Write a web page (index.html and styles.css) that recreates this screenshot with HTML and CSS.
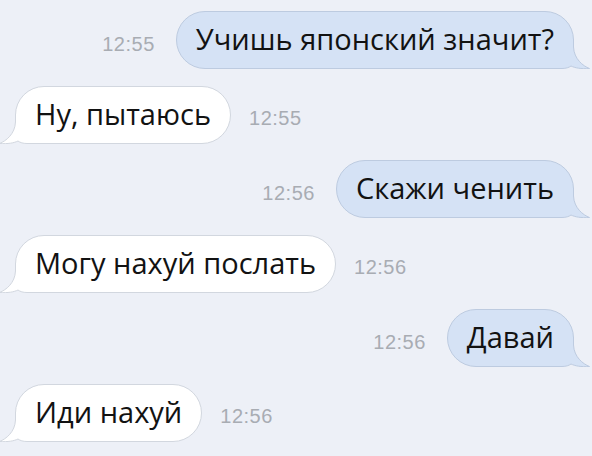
FILE: index.html
```html
<!DOCTYPE html>
<html lang="ru">
<head>
  <meta charset="UTF-8">
  <meta name="viewport" content="width=device-width, initial-scale=1.0">
  <title>Чат</title>
  <link rel="stylesheet" href="styles.css">
</head>
<body>
  <div class="chat">

    <div class="msg out">
      <span class="time">12:55</span>
      <div class="bubble">
        <svg class="tail" width="46" height="30" viewBox="0 0 46 30"><path class="fill" d="M0,0 H29.5 V8 C30,20 39,27 45.5,29.5 C37,30 31,29 27,27 C25,28.5 22,29.5 18,29.5 H0 Z"/><path class="line" d="M29.5,0 V8 C30,20 39,27 45.5,29.5 C37,30 31,29 27,27 C25,28.5 22,29.5 18,29.5 H0"/></svg>
        <span class="text">Учишь японский значит?</span>
      </div>
    </div>

    <div class="msg in">
      <div class="bubble">
        <svg class="tail" width="46" height="30" viewBox="0 0 46 30"><path class="fill" d="M0,0 H29.5 V8 C30,20 39,27 45.5,29.5 C37,30 31,29 27,27 C25,28.5 22,29.5 18,29.5 H0 Z"/><path class="line" d="M29.5,0 V8 C30,20 39,27 45.5,29.5 C37,30 31,29 27,27 C25,28.5 22,29.5 18,29.5 H0"/></svg>
        <span class="text">Ну, пытаюсь</span>
      </div>
      <span class="time">12:55</span>
    </div>

    <div class="msg out">
      <span class="time">12:56</span>
      <div class="bubble">
        <svg class="tail" width="46" height="30" viewBox="0 0 46 30"><path class="fill" d="M0,0 H29.5 V8 C30,20 39,27 45.5,29.5 C37,30 31,29 27,27 C25,28.5 22,29.5 18,29.5 H0 Z"/><path class="line" d="M29.5,0 V8 C30,20 39,27 45.5,29.5 C37,30 31,29 27,27 C25,28.5 22,29.5 18,29.5 H0"/></svg>
        <span class="text">Скажи ченить</span>
      </div>
    </div>

    <div class="msg in">
      <div class="bubble">
        <svg class="tail" width="46" height="30" viewBox="0 0 46 30"><path class="fill" d="M0,0 H29.5 V8 C30,20 39,27 45.5,29.5 C37,30 31,29 27,27 C25,28.5 22,29.5 18,29.5 H0 Z"/><path class="line" d="M29.5,0 V8 C30,20 39,27 45.5,29.5 C37,30 31,29 27,27 C25,28.5 22,29.5 18,29.5 H0"/></svg>
        <span class="text">Могу нахуй послать</span>
      </div>
      <span class="time">12:56</span>
    </div>

    <div class="msg out">
      <span class="time">12:56</span>
      <div class="bubble">
        <svg class="tail" width="46" height="30" viewBox="0 0 46 30"><path class="fill" d="M0,0 H29.5 V8 C30,20 39,27 45.5,29.5 C37,30 31,29 27,27 C25,28.5 22,29.5 18,29.5 H0 Z"/><path class="line" d="M29.5,0 V8 C30,20 39,27 45.5,29.5 C37,30 31,29 27,27 C25,28.5 22,29.5 18,29.5 H0"/></svg>
        <span class="text">Давай</span>
      </div>
    </div>

    <div class="msg in">
      <div class="bubble">
        <svg class="tail" width="46" height="30" viewBox="0 0 46 30"><path class="fill" d="M0,0 H29.5 V8 C30,20 39,27 45.5,29.5 C37,30 31,29 27,27 C25,28.5 22,29.5 18,29.5 H0 Z"/><path class="line" d="M29.5,0 V8 C30,20 39,27 45.5,29.5 C37,30 31,29 27,27 C25,28.5 22,29.5 18,29.5 H0"/></svg>
        <span class="text">Иди нахуй</span>
      </div>
      <span class="time">12:56</span>
    </div>

  </div>
</body>
</html>
```
FILE: styles.css
```css
body {
  margin: 0;
  background-color: #edf0f7;
  font-family: "Liberation Sans", Arial, sans-serif;
  color: #121212;
}
.chat {
  display: flex;
  flex-direction: column;
  gap: 16.6px;
  padding-top: 11px;
}
.msg {
  display: flex;
  align-items: center;
}
.msg.out {
  justify-content: flex-end;
  padding-right: 18px;
}
.msg.in {
  padding-left: 15px;
}
.bubble {
  position: relative;
  height: 58px;
  box-sizing: border-box;
  padding: 0 19px 2px;
  line-height: 54px;
  font-family: "Open Sans", "Liberation Sans", sans-serif;
  font-size: 29px;
  border-radius: 29px;
  border: 1px solid;
  white-space: nowrap;
}
.text {
  position: relative;
}
.out .bubble {
  background-color: #d5e2f5;
  border-color: #bdcbe0;
}
.in .bubble {
  background-color: #fff;
  border-color: #d2d7df;
}
.time {
  font-size: 20px;
  letter-spacing: 0.5px;
  color: #a8acb3;
  margin-top: 8px;
}
.out .time {
  margin-right: 21px;
}
.in .time {
  margin-left: 18px;
}
.tail {
  position: absolute;
  bottom: -1px;
  display: block;
}
.out .tail {
  right: -17px;
}
.in .tail {
  left: -17px;
  transform: scaleX(-1);
}
.out .fill {
  fill: #d5e2f5;
}
.in .fill {
  fill: #fff;
}
.line {
  fill: none;
  stroke-width: 1;
}
.out .line {
  stroke: #bdcbe0;
}
.in .line {
  stroke: #d2d7df;
}
```
